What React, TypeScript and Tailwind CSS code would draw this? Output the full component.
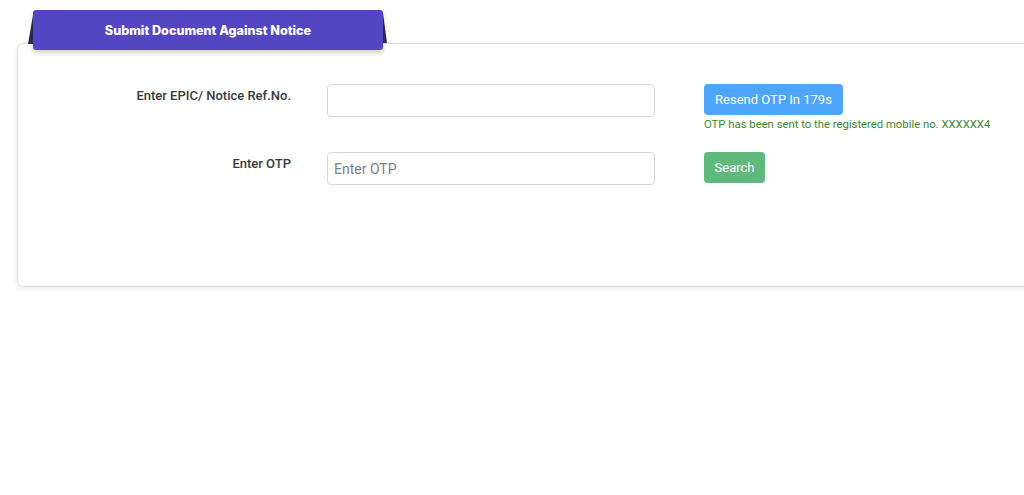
import { useState } from 'react';

export default function App() {
  const [epic, setEpic] = useState('');
  const [otp, setOtp] = useState('');

  return (
    <div className="relative w-full h-[495px] overflow-hidden bg-white" style={{ fontFamily: 'Roboto, "Liberation Sans", sans-serif' }}>
      {/* Card */}
      <div className="ml-[17px] mt-[43px] w-[1030px] h-[244px] rounded-md border border-[#dcdcdc] bg-white shadow-[0_2px_6px_rgba(0,0,0,0.08)]">
        <div className="pt-[40px]">
          {/* Row 1 */}
          <div className="flex h-[68px]">
            <label className="w-[273px] shrink-0 pt-[2px] text-right text-[13px] font-medium text-[#3a3a3a]">
              Enter EPIC/ Notice Ref.No.
            </label>
            <input
              value={epic}
              onChange={e => setEpic(e.target.value)}
              className="ml-[36px] w-[328px] h-[33px] rounded border border-[#d5d9de] px-[6px] text-[14px] outline-none"
            />
            <div className="ml-[49px] flex flex-col">
              <button className="h-[31px] w-[139px] rounded bg-[#4ea5fc] text-[13px] text-white">
                Resend OTP In 179s
              </button>
              <p className="mt-[2px] w-[286px] overflow-hidden whitespace-nowrap text-[11.3px] text-[#3a8a2c]">
                OTP has been sent to the registered mobile no. XXXXXX4
              </p>
            </div>
          </div>
          {/* Row 2 */}
          <div className="flex">
            <label className="w-[273px] shrink-0 pt-[2px] text-right text-[13px] font-medium text-[#3a3a3a]">
              Enter OTP
            </label>
            <input
              value={otp}
              onChange={e => setOtp(e.target.value)}
              placeholder="Enter OTP"
              className="ml-[36px] w-[328px] h-[33px] rounded border border-[#d5d9de] px-[6px] text-[14px] text-[#333] placeholder:text-[#7a7f85] outline-none"
            />
            <button className="ml-[49px] h-[31px] w-[61px] rounded bg-[#5fb97c] text-[13px] text-white">
              Search
            </button>
          </div>
        </div>
      </div>

      {/* Tab ribbon */}
      <svg className="absolute left-[26px] top-[10px]" width="364" height="36" viewBox="0 0 364 36">
        <polygon points="2,34 7,5 7,34" fill="#2e2b55" />
        <polygon points="357,3 361,33 357,33" fill="#2e2b55" />
      </svg>
      <div
        className="absolute left-[33px] top-[10px] flex h-[40px] w-[350px] items-center justify-center rounded-[3px] bg-[#5446c2] pt-[2px] shadow-[0_3px_5px_rgba(0,0,0,0.18)]"
        style={{ fontFamily: 'Inter, "Noto Sans", sans-serif' }}
      >
        <span className="text-[12.6px] font-extrabold text-white">Submit Document Against Notice</span>
      </div>
    </div>
  );
}
